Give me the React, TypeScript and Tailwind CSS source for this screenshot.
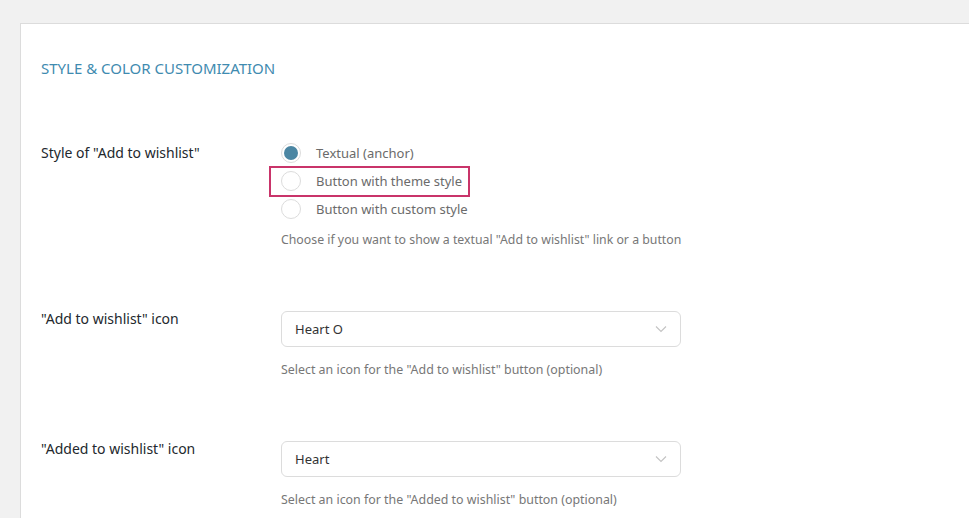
import React from "react";

const font = { fontFamily: '"Noto Sans", "Open Sans", sans-serif' };

const Radio = ({ checked, label, marked }: { checked?: boolean; label: string; marked?: boolean }) => (
  <div className="relative inline-flex h-7 items-center self-start">
    {marked && (
      <span className="pointer-events-none absolute -left-[12px] -right-[8px] -top-[1px] -bottom-[2px] border-2 border-[#c9346a]" />
    )}
    <span className="flex h-5 w-5 items-center justify-center rounded-full border border-[#dcdcdc] bg-white">
      {checked && <span className="h-[14px] w-[14px] rounded-full bg-[#4b86a3]" />}
    </span>
    <span className="ml-[15px] text-[13px] leading-5 text-[#6b6b6b]">{label}</span>
  </div>
);

const Select = ({ value }: { value: string }) => (
  <div className="flex h-9 w-[400px] items-center justify-between rounded-md border border-[#dcdcdc] bg-white pl-[13px] pr-[13px]">
    <span className="pt-px text-[13px] text-[#333]">{value}</span>
    <svg width="12" height="8" viewBox="0 0 12 8" fill="none">
      <path d="M1 1.5l5 5 5-5" stroke="#c4c4c4" strokeWidth="1.2" />
    </svg>
  </div>
);

const Row = ({ label, children }: { label: string; children: React.ReactNode }) => (
  <div className="flex items-start">
    <div className="w-[240px] shrink-0 text-[14px] leading-4 text-[#23282d]">{label}</div>
    <div className="flex flex-col">{children}</div>
  </div>
);

export default function App() {
  return (
    <div className="h-[518px] w-[969px] overflow-hidden bg-[#f1f1f1] pl-5 pt-[23px]" style={font}>
      <div className="h-[600px] border-l border-t border-[#dcdcdc] bg-white pl-5 pt-[34px]">
        <h2 className="text-[15px] leading-5 text-[#3f8bb0]">STYLE &amp; COLOR CUSTOMIZATION</h2>

        <div className="mt-[61px] flex items-start">
          <div className="w-[240px] shrink-0 text-[14px] leading-7 text-[#23282d]">
            Style of "Add to wishlist"
          </div>
          <div className="flex flex-col">
            <Radio checked label="Textual (anchor)" />
            <Radio marked label="Button with theme style" />
            <Radio label="Button with custom style" />
            <p className="mt-[7px] text-[12.3px] leading-5 text-[#777]">
              Choose if you want to show a textual "Add to wishlist" link or a button
            </p>
          </div>
        </div>

        <div className="mt-[61px]">
          <Row label={'"Add to wishlist" icon'}>
            <Select value="Heart O" />
            <p className="mt-[13px] text-[12.4px] leading-5 text-[#777]">
              Select an icon for the "Add to wishlist" button (optional)
            </p>
          </Row>
        </div>

        <div className="mt-[61px]">
          <Row label={'"Added to wishlist" icon'}>
            <Select value="Heart" />
            <p className="mt-[13px] text-[12.4px] leading-5 text-[#777]">
              Select an icon for the "Added to wishlist" button (optional)
            </p>
          </Row>
        </div>
      </div>
    </div>
  );
}
